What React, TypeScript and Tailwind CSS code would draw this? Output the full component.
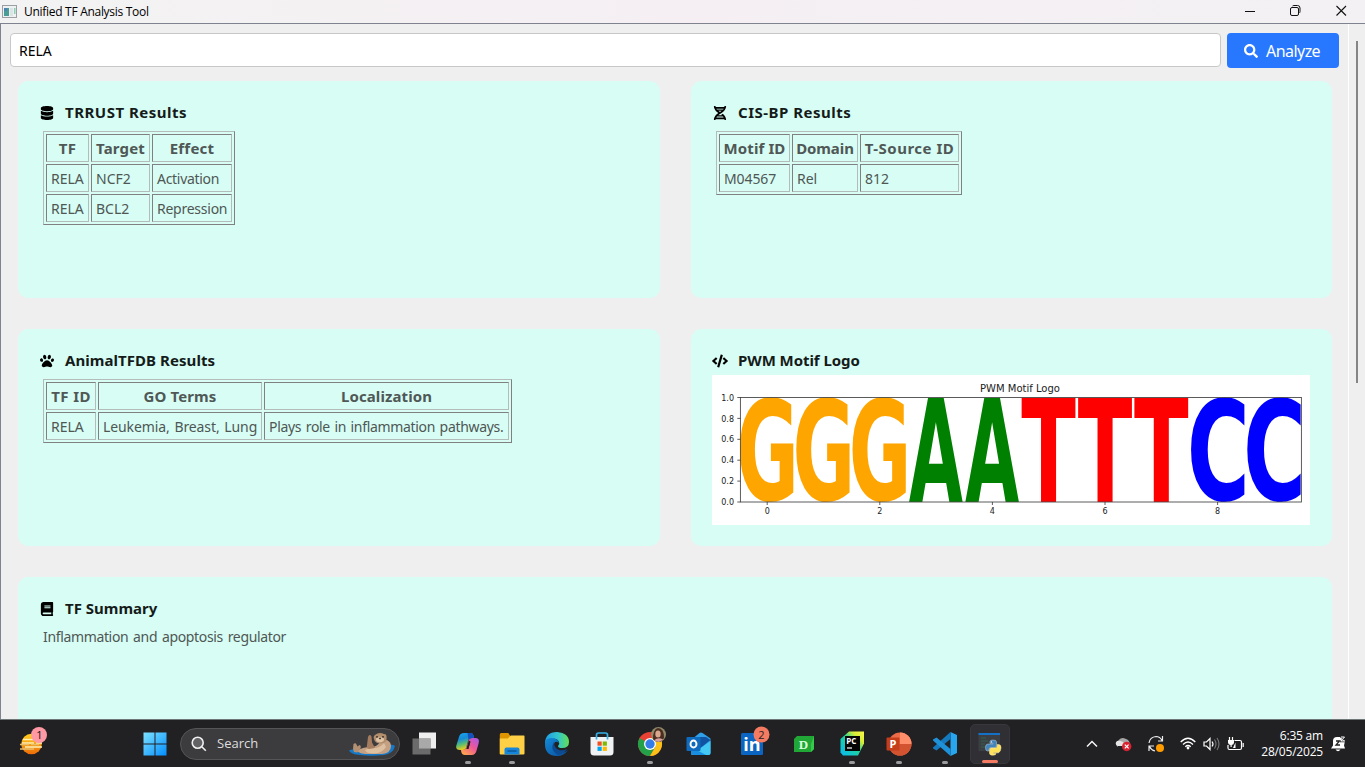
import React from "react";
import { FaDatabase, FaDna, FaPaw, FaCode, FaBook, FaSearch } from "react-icons/fa";

type Col = { title: string; track?: string };

function DataTable({ grid, head, rows }: { grid: string; head: Col[]; rows: Col[][] }) {
  return (
    <div className="ml-1 mt-[7px] w-fit border border-b-[#808080] border-l-[#b4bcba] border-r-[#808080] border-t-[#b4bcba] p-[2px] text-[14px] text-[#4f5754]">
      <div className={`grid auto-rows-[28px] gap-[2px] ${grid}`}>
        {head.map((h) => (
          <div key={h.title} className={`flex items-center justify-center whitespace-nowrap border border-b-[#b4bcba] border-l-[#808080] border-r-[#b4bcba] border-t-[#808080] text-[15px] font-bold text-[#505856] ${h.track ?? ""}`}>
            {h.title}
          </div>
        ))}
        {rows.flatMap((r, i) =>
          r.map((c) => (
            <div key={i + c.title} className={`flex items-center whitespace-nowrap border border-b-[#b4bcba] border-l-[#808080] border-r-[#b4bcba] border-t-[#808080] pl-1 ${c.track ?? ""}`}>
              {c.title}
            </div>
          ))
        )}
      </div>
    </div>
  );
}

function Card({ icon, title, track, children }: { icon: React.ReactNode; title: string; track?: string; children?: React.ReactNode }) {
  return (
    <section className="h-[217px] min-w-0 rounded-[10px] bg-[#d7fdf5] pl-[21px] pt-[19px]">
      <h2 className="flex h-6 items-center text-[15px] font-bold text-[#151b19]">
        <span className="flex w-[26px] items-center text-black">{icon}</span>
        <span className={`whitespace-nowrap ${track ?? ""}`}>{title}</span>
      </h2>
      {children}
    </section>
  );
}

const letters = [
  { c: "G", f: "#ffa500", x: 27.9 },
  { c: "G", f: "#ffa500", x: 84.0 },
  { c: "G", f: "#ffa500", x: 140.3 },
  { c: "A", f: "#008000", x: 197 },
  { c: "A", f: "#008000", x: 253.3 },
  { c: "T", f: "#ff0000", x: 309.7 },
  { c: "T", f: "#ff0000", x: 366.2 },
  { c: "T", f: "#ff0000", x: 422.4 },
  { c: "C", f: "#0000ff", x: 478.7 },
  { c: "C", f: "#0000ff", x: 535 },
];

/* Ink box of each DejaVu Sans Bold capital, in 1/2048 em. */
const ink: Record<string, number[]> = {
  G: [96, 1540, -24, 1513],
  A: [7, 1579, 0, 1493],
  T: [10, 1386, 0, 1493],
  C: [96, 1376, -24, 1513],
};

function MotifPlot() {
  return (
    <svg width="598" height="150" viewBox="0 0 598 150" className="mt-[3px] block bg-white" fontFamily="'DejaVu Sans', sans-serif">
      <g fontWeight="bold" fontSize="100">
        {letters.map((l, i) => {
          const [x0, x1, y0, y1] = ink[l.c];
          const k = 100 / 2048;
          const sx = 53.8 / ((x1 - x0) * k);
          const sy = 104.5 / ((y1 - y0) * k);
          return (
            <text key={i} fill={l.f} transform={`translate(${l.x - x0 * k * sx} ${127 + y0 * k * sy}) scale(${sx} ${sy})`}>{l.c}</text>
          );
        })}
      </g>
      <rect x="28.4" y="22.5" width="561" height="104.5" fill="none" stroke="#4a4a4a" strokeWidth="0.9" />
      <g fontSize="8" fill="#222" textAnchor="end">
        {["1.0", "0.8", "0.6", "0.4", "0.2", "0.0"].map((t, i) => (
          <g key={t}>
            <path d={`M25.3 ${22.5 + i * 20.9}H28.4`} stroke="#333" strokeWidth="0.8" />
            <text x="22" y={25.6 + i * 20.9}>{t}</text>
          </g>
        ))}
      </g>
      <g fontSize="8" fill="#222" textAnchor="middle">
        {["0", "2", "4", "6", "8"].map((t, i) => (
          <g key={t}>
            <path d={`M${55.2 + i * 112.6} 127V130`} stroke="#333" strokeWidth="0.8" />
            <text x={55.2 + i * 112.6} y="139.2">{t}</text>
          </g>
        ))}
        <text x="308" y="17" fontSize="10" textLength="80" lengthAdjust="spacingAndGlyphs">PWM Motif Logo</text>
      </g>
    </svg>
  );
}

function Slot({ children, className, dot }: { children: React.ReactNode; className: string; dot?: boolean }) {
  return (
    <div className={`relative flex h-12 shrink-0 items-center justify-center ${className}`}>
      {children}
      {dot && <span className="absolute bottom-[4px] h-[3px] w-[6px] rounded-full bg-[#9b9b9e]" />}
    </div>
  );
}

function Weather() {
  return (
    <svg width="28" height="28" viewBox="0 0 28 28">
      <defs><linearGradient id="sun" x2="0" y2="1"><stop stopColor="#ffd21c" /><stop offset="1" stopColor="#ee6b08" /></linearGradient></defs>
      <circle cx="12.5" cy="17" r="10.3" fill="url(#sun)" />
      <path d="M4 12.5h17M3 16h12M17 16h6M6 20h17" stroke="#fff0b5" strokeWidth="1.6" />
      <path d="M1 17.5h9M12 17.5h8M1 22h14" stroke="#e8bd6c" strokeWidth="1.6" />
      <circle cx="20" cy="8" r="8" fill="#ff99a4" />
      <text x="20.500" y="12" fontSize="11" textAnchor="middle" fill="#111" fontFamily="'Open Sans', sans-serif">1</text>
    </svg>
  );
}

function Windows() {
  return (
    <svg width="24" height="24" viewBox="0 0 24 24">
      <defs><linearGradient id="win" gradientUnits="userSpaceOnUse" x1="0" y1="0" x2="24" y2="24"><stop stopColor="#80e4ff" /><stop offset="1" stopColor="#008cff" /></linearGradient></defs>
      <path d="M.5.5h11v11H.5zM12.500.5h11v11h-11zM.5 12.500h11v11H.5zM12.500 12.500h11v11h-11z" fill="url(#win)" />
    </svg>
  );
}

function Otter() {
  return (
    <svg width="48" height="24" viewBox="0 0 48 24">
      <path d="M1 18.500q4-2 9-1 18 3 27-1 5-6 10-2.500-2 8-11 9-18 1.500-28-.5-5-1-7-4z" fill="#1479c9" />
      <path d="M9 19q4 3.500 10 3h15q9-1 9-8 0-4-4-6l-7 2q-3 5-9 5-9 0-14 4z" fill="#c5a083" />
      <path d="M17 18q6-3 11-2 5-1 8-5l2 4q-4 6-12 6.500-8 0-9-3.500z" fill="#dcc0a0" />
      <path d="M5 17l.5-5q2-1.500 3 .5l1 2 2-1.500q2 1 1 3.500l-3 4-3.500-.5z" fill="#b39072" />
      <path d="M19 13l1-8q1.500-3.500 3.500-.5l.5 6 3 5.500-6 1q-3-1-2-4z" fill="#a67c5e" />
      <path d="M26 7q-1-3 1-4 4-3.500 9-1 3 0 2.500 3 1 6-5.500 6.500-6 0-7-4.500z" fill="#b38e6d" />
      <ellipse cx="32" cy="7.500" rx="4" ry="2.800" fill="#dfc4a5" />
      <circle cx="29" cy="4.900" r=".8" fill="#24180f" /><circle cx="35" cy="4.900" r=".8" fill="#24180f" />
      <path d="M30.500 5.700h3l-1.500 1.800z" fill="#33231a" />
    </svg>
  );
}

function Copilot() {
  return (
    <svg width="24" height="24" viewBox="0 0 24 24">
      <defs>
        <linearGradient id="cpa" x1="0" y1="0" x2=".3" y2="1"><stop stopColor="#1aa7ee" /><stop offset=".4" stopColor="#168cd8" /><stop offset=".7" stopColor="#59bd73" /><stop offset="1" stopColor="#f3cb1b" /></linearGradient>
        <linearGradient id="cpb" x1="1" y1="0" x2=".2" y2="1"><stop stopColor="#a65af0" /><stop offset=".5" stopColor="#ee5797" /><stop offset="1" stopColor="#ffa64b" /></linearGradient>
      </defs>
      <path fillRule="evenodd" d="M16 6h3q5 0 3.700 5l-2 7q-1 5-5.200 5H9q-3 0-3.700-3L5 18h2.500q2 0 2.800-3l2-6q1-3 3.700-3zM14.500 9.500l-2.200 7.500h-1.500z" fill="url(#cpb)" />
      <path d="M8 1h7q2 0 2.700 3L18 6h-2q-3 0-4 3l-2 7q-1 2-3 2H4q-5 0-3.500-5L3 5q1-4 5-4z" fill="url(#cpa)" />
      <path d="M11.500 1H15q2 0 2.700 3L18 6h-2q-2.500 0-3.500 2z" fill="#1550bd" />
      <path d="M12.800 8.500l1.700 1-2.200 7.500h-2z" fill="#212124" />
    </svg>
  );
}

function Folder() {
  return (
    <svg width="26" height="24" viewBox="0 0 26 24">
      <path d="M.8 2.500Q.8 1 2.300 1h7l2 3H25v18H.8z" fill="#dc9500" />
      <path d="M.8 6.500h8l3-3H25q.5 0 .5 1v17q0 1-1 1H1.500q-.7 0-.7-1z" fill="#ffcf46" />
      <path d="M5.500 22.500V17.500q0-2 2-2h11q2 0 2 2v5z" fill="#1686dc" /><path d="M9 19h8" stroke="#0b5796" strokeWidth="1.500" strokeLinecap="round" />
    </svg>
  );
}

function Edge() {
  return (
    <svg width="24" height="24" viewBox="0 0 24 24">
      <defs>
        <linearGradient id="ea" x2="1"><stop stopColor="#1e9de5" /><stop offset=".55" stopColor="#33c6cb" /><stop offset="1" stopColor="#63df52" /></linearGradient>
        <linearGradient id="eb" x2="1" y2="1"><stop stopColor="#128bd8" /><stop offset="1" stopColor="#0a4d9c" /></linearGradient>
      </defs>
      <path d="M0 12Q0 0 12 0q12 1 12 10 0 6-7 6-4 0-4-2 2-2 1-4-2-4-6-3Q3 7 0 12z" fill="url(#ea)" />
      <path d="M0 12q0-6 6-6 7 0 8 5-4-3-5 1-1 6 5 9 5 1 9-3-4 6-11 6Q0 24 0 12z" fill="url(#eb)" />
      <path d="M9 10q-5 8 4 13 6-1 9-6-4 2-8 1-5-2-5-8z" fill="#0c4a91" />
    </svg>
  );
}

function Store() {
  return (
    <svg width="24" height="24" viewBox="0 0 24 24">
      <path d="M.5 5h23v15q0 3.500-3.500 3.500H4Q.5 23.500.5 20z" fill="#f1f2f4" />
      <path d="M6.500 7.500V3q0-2 2-2h7q2 0 2 2v4.500" fill="none" stroke="#36b1e7" strokeWidth="1.700" />
      <path d="M7.500 9.500h4.200v4.200H7.500z" fill="#f25022" /><path d="M12.700 9.500h4.200v4.200h-4.200z" fill="#7fba00" />
      <path d="M7.500 14.700h4.200v4.200H7.500z" fill="#00a4ef" /><path d="M12.700 14.700h4.200v4.200h-4.200z" fill="#ffb900" />
    </svg>
  );
}

function Chrome() {
  return (
    <svg width="30" height="30" viewBox="0 0 30 30">
      <circle cx="13" cy="18" r="12" fill="#e94235" />
      <path d="M2.600 12A12 12 0 0 0 13 30l5.200-9-5.200-3z" fill="#24a148" />
      <path d="M13 30A12 12 0 0 0 23.400 12H13l5.200 9z" fill="#fbc116" />
      <circle cx="13" cy="18" r="6" fill="#fff" /><circle cx="13" cy="18" r="4.700" fill="#347de8" />
      <circle cx="21.500" cy="8.500" r="7.500" fill="#8f8a68" />
      <path d="M16 13q0-10 5-11 6 0 6 10l-4 4-5-1z" fill="#4b2d22" />
      <ellipse cx="21" cy="8" rx="2.700" ry="3.600" fill="#d9a88c" /><path d="M17 14.500q4-4 9-1l-4 2.500z" fill="#d9a0a0" />
    </svg>
  );
}

function Outlook() {
  return (
    <svg width="25" height="24" viewBox="0 0 25 24">
      <path d="M5 8L13.500 1q1.500-1 3 0l8 5.500V21q0 2-2 2H7q-2 0-2-2z" fill="#2f9fe8" />
      <path d="M12 5h8l4.500 3-10 8-6-4z" fill="#1152a3" /><path d="M5 23l19.500-14v12q0 2-2 2z" fill="#43c9f4" />
      <path d="M5 15l15 8H7q-2 0-2-2z" fill="#198ee0" />
      <rect x=".5" y="5" width="14" height="14" rx="1" fill="#0f6cbd" />
      <ellipse cx="7.500" cy="12" rx="3" ry="3.500" fill="none" stroke="#fff" strokeWidth="1.900" />
    </svg>
  );
}

function LinkedIn() {
  return (
    <svg width="30" height="30" viewBox="0 0 30 30">
      <rect x="1" y="7" width="22" height="22" rx="1.500" fill="#0a66c2" />
      <text x="12" y="25" textAnchor="middle" fill="#fff" fontSize="18" fontWeight="bold" fontFamily="'Open Sans', sans-serif">in</text>
      <circle cx="21.500" cy="8.500" r="8" fill="#f47b62" />
      <text x="21.500" y="12.500" textAnchor="middle" fill="#222" fontSize="11" fontFamily="'Open Sans', sans-serif">2</text>
    </svg>
  );
}

function Dashed() {
  return (
    <svg width="22" height="18" viewBox="0 0 22 18">
      <path d="M4 1h17v13l-3 3H1V4z" fill="#20a735" /><path d="M21 1v13l-3 3V9z" fill="#36c94b" />
      <text x="10.500" y="13.500" textAnchor="middle" fill="#d7ffdc" fontSize="13" fontWeight="bold" fontFamily="'Liberation Serif', serif">D</text>
    </svg>
  );
}

function PyCharm() {
  return (
    <svg width="25" height="25" viewBox="0 0 25 25">
      <defs><linearGradient id="pc" x1="1" y1="0" x2="0" y2="1"><stop stopColor="#fcf84a" /><stop offset=".25" stopColor="#d9ed35" /><stop offset=".5" stopColor="#20d39a" /><stop offset="1" stopColor="#07b8f5" /></linearGradient></defs>
      <path d="M9 .5h15v12l-6 12H3l-2.500-3V8z" fill="url(#pc)" />
      <rect x="5" y="5" width="15" height="15" fill="#050505" />
      <text x="6.300" y="12.500" fill="#fff" fontSize="8" fontWeight="bold" fontFamily="'Open Sans', sans-serif">PC</text><path d="M7 17h5" stroke="#fff" strokeWidth="1.200" />
    </svg>
  );
}

function PowerPoint() {
  return (
    <svg width="26" height="24" viewBox="0 0 26 24">
      <circle cx="14" cy="12" r="11.500" fill="#ed6c47" /><path d="M14 .5A11.500 11.500 0 0 1 25.500 12H14z" fill="#ff8f6b" /><path d="M2.500 12h23a11.500 11.500 0 0 1-23 0z" fill="#d35230" />
      <rect x=".5" y="5.500" width="13" height="13" rx="1" fill="#c43e1c" />
      <text x="7" y="16" textAnchor="middle" fill="#fff" fontSize="11" fontWeight="bold" fontFamily="'Open Sans', sans-serif">P</text>
    </svg>
  );
}

function VSCode() {
  return (
    <svg width="24" height="24" viewBox="0 0 24 24">
      <path d="M17.500 0L24 3v18l-6.500 3z" fill="#27a6ef" />
      <path d="M17.500 0v7L3.500 18.500 0 16.500v-1z" fill="#1479bd" /><path d="M17.500 24v-7L3.500 5.500 0 7.500v1z" fill="#1f91d8" />
    </svg>
  );
}

function PythonApp() {
  return (
    <svg width="24" height="24" viewBox="0 0 24 24">
      <path d="M.5 1h21.500v18H.5z" fill="#3b3e42" /><path d="M.5 1h21.500v2H.5z" fill="#1471c5" />
      <path d="M3 6h5M3 9h7M3 12h4M3 15h5" stroke="#35634c" />
      <path d="M12 9.500Q12 8 15 8q3.500 0 3.500 2v4q0 1.500-1.500 1.500h-4q-2 0-2 2v1.500H9.500Q7.500 19 7.500 15.500T10 12h5v-.7h-3z" fill="#4584b8" stroke="#b8d3e7" strokeWidth=".5" />
      <path d="M18 21.500q0 1.700-3 1.700-3.500 0-3.500-2v-3.500q0-1.700 1.700-1.700h4q2 0 2-2V12.500h1.300q2.500 0 2.500 3.300T20.500 20.800h-5v.7z" fill="#ffe15a" stroke="#fff2b2" strokeWidth=".5" />
      <circle cx="13.500" cy="9.900" r=".6" fill="#fff" />
    </svg>
  );
}

function Tray() {
  return (
    <>
      <svg width="12" height="8" viewBox="0 0 12 8" className="ml-[76px]"><path d="M1 6.500l5-5 5 5" fill="none" stroke="#f5f5f5" strokeWidth="1.500" /></svg>
      <svg width="17" height="16" viewBox="0 0 17 16" className="ml-[17px] mt-px">
        <path d="M3 11q-4-3 0-6Q6 0 11 3q4 1 4 7H3z" fill="#a7a7a7" /><path d="M2 5q6-1 9 5H3q-4-2-1-5z" fill="#e4e4e4" />
        <circle cx="11.700" cy="10.500" r="4.700" fill="#d92332" /><path d="M9.800 8.600l3.800 3.800m0-3.800l-3.800 3.800" stroke="#fff" strokeWidth="1.200" />
      </svg>
      <svg width="19" height="18" viewBox="0 0 19 18" className="ml-[15px]">
        <path d="M2 8Q3 2 9 1.500q4 0 6 4M15.500 1v5H11M2 16v-5h5M2.500 11.500Q4 15 8 16" fill="none" stroke="#eee" strokeWidth="1.200" /><circle cx="13" cy="13" r="4" fill="#ff9c00" />
      </svg>
      <svg width="16" height="13" viewBox="0 0 16 13" className="ml-[14px]">
        <path d="M.7 5q7.300-7.500 14.600 0M3 7.500q5-5 10 0M5.300 9.700q2.700-2.500 5.400 0" fill="none" stroke="#fff" strokeWidth="1.300" /><circle cx="8" cy="11" r="1.400" fill="#fff" />
      </svg>
      <svg width="17" height="14" viewBox="0 0 17 14" className="ml-[7px]">
        <path d="M1 5h2.500L7 1.500v11L3.500 9H1zM9 4.500q2 2.500 0 5" fill="none" stroke="#fff" strokeWidth="1.200" /><path d="M11.500 2.500q3 4.500 0 9M14 1q4 6 0 12" fill="none" stroke="#777" strokeWidth="1.100" />
      </svg>
      <svg width="17" height="14" viewBox="0 0 17 14" className="ml-[7px]">
        <path d="M7.500 3.500H13q1.500 0 1.500 1.500v6q0 1.500-1.500 1.500H2.500Q1 12.500 1 11V8" fill="none" stroke="#fff" strokeWidth="1.200" /><path d="M16.200 6v4M2.500 0v3M5.500 0v3" stroke="#fff" strokeWidth="1.200" /><path d="M1 3h6v2.500q0 2-2.300 2.500v2H3.500V8Q1 7.500 1 5.500zM6 11l2.500-5.500V11z" fill="#fff" />
      </svg>
    </>
  );
}

export default function App() {
  return (
    <div className="flex h-[767px] w-[1365px] flex-col overflow-hidden bg-[#efefef] font-['Noto_Sans',sans-serif]">
      <header className="flex h-6 shrink-0 items-center border-b border-[#7f838f] bg-linear-to-r from-[#f3f3f3] via-[#f5eff3] to-[#f3f1f3] pl-[2px]">
        <svg width="15" height="13" viewBox="0 0 15 13" className="-mt-px"><rect x=".5" y=".5" width="14" height="12" fill="#eef1f2" stroke="#9da0a3" /><path d="M2 3h5v8H2z" fill="#4b9e96" /><path d="M2 3h3v3H2z" fill="#4f83b4" /><path d="M8 3h3v8H8z" fill="#dce3e5" /><path d="M12 3h1.500v6H12z" fill="#8ccfb3" /></svg>
        <span className="ml-[7px] font-['Open_Sans',sans-serif] text-[12px] tracking-[-0.29px] text-black">Unified TF Analysis Tool</span>
        <svg width="102" height="12" viewBox="0 0 102 12" className="ml-auto mr-[18px] -mt-px" fill="none" stroke="#111">
          <path d="M0 6.500h10" /><path d="M45.500 4q0-1.500 1.500-1.500h5q1.500 0 1.500 1.500v5q0 1.500-1.500 1.500h-5q-1.500 0-1.500-1.500zM47.500 1q.5-.5 1.500-.5h3.500q2.500 0 2.500 2.500v3.500q0 1-.7 1.500" /><path d="M91.500 1l9.500 9.500M101 1l-9.500 9.500" strokeWidth="1.100" />
        </svg>
      </header>

      <main className="flex h-[695px] shrink-0 overflow-hidden border-l border-[#7f838f]">
        <div className="flex w-[1347px] shrink-0 flex-col">
          <div className="flex gap-[6px] pl-[9px] pt-[9px]">
            <div className="flex h-[34px] w-[1211px] items-center rounded-[4px] border border-[#c8c8c8] bg-white pl-2 text-[14px] text-black">RELA</div>
            <button className="flex h-[35px] w-[112px] items-center rounded-[4px] bg-[#2878ff] pl-[17px] text-[16px] text-white">
              <FaSearch className="mr-[8px] size-[14px] shrink-0" />
              <span className="tracking-[-0.55px]">Analyze</span>
            </button>
          </div>
          <div className="mt-[13px] grid grid-cols-[642px_641px] gap-x-[31px] gap-y-[31px] pl-[17px]">
            <Card icon={<FaDatabase className="ml-px mt-px size-[14px]" />} title="TRRUST Results" track="tracking-[0.5px]">
              <DataTable
                grid="grid-cols-[43px_59px_80px]"
                head={[{ title: "TF", track: "tracking-[0.4px]" }, { title: "Target", track: "tracking-[0.15px]" }, { title: "Effect", track: "tracking-[0.25px]" }]}
                rows={[
                  [{ title: "RELA" }, { title: "NCF2" }, { title: "Activation", track: "tracking-[-0.3px]" }],
                  [{ title: "RELA" }, { title: "BCL2" }, { title: "Repression", track: "tracking-[-0.25px]" }],
                ]}
              />
            </Card>
            <Card icon={<FaDna className="ml-px mt-px size-[14px]" />} title="CIS-BP Results" track="tracking-[0.5px]">
              <DataTable
                grid="grid-cols-[71px_66px_99px]"
                head={[{ title: "Motif ID", track: "tracking-[0.1px]" }, { title: "Domain", track: "tracking-[-0.1px]" }, { title: "T-Source ID", track: "tracking-[0.5px]" }]}
                rows={[[{ title: "M04567", track: "tracking-[-0.1px]" }, { title: "Rel" }, { title: "812" }]]}
              />
            </Card>
            <Card icon={<FaPaw className="ml-px mt-px size-[14px]" />} title="AnimalTFDB Results" track="tracking-[0.06px]">
              <DataTable
                grid="grid-cols-[50px_164px_245px]"
                head={[{ title: "TF ID", track: "tracking-[0.4px]" }, { title: "GO Terms", track: "tracking-[0.12px]" }, { title: "Localization", track: "tracking-[0.1px]" }]}
                rows={[[{ title: "RELA" }, { title: "Leukemia, Breast, Lung", track: "tracking-[-0.1px] [word-spacing:1.2px]" }, { title: "Plays role in inflammation pathways.", track: "tracking-[-0.32px] [word-spacing:1.2px]" }]]}
              />
            </Card>
            <Card icon={<FaCode className="mt-px size-4" />} title="PWM Motif Logo" track="tracking-[-0.07px]">
              <MotifPlot />
            </Card>
            <div className="col-span-2">
              <Card icon={<FaBook className="ml-px mt-px size-[14px]" />} title="TF Summary">
                <p className="ml-1 mt-[5px] text-[14px] leading-6 tracking-[-0.35px] text-[#4f5754] [word-spacing:1.5px]">Inflammation and apoptosis regulator</p>
              </Card>
            </div>
          </div>
        </div>
        <div className="flex grow border-l border-white pl-[7px] pt-[17px]">
          <div className="h-[342px] w-[2px] bg-[#858585]" />
        </div>
      </main>

      <footer className="flex h-12 shrink-0 items-center border-t border-[#6f7678] bg-[#212124] font-['Open_Sans',sans-serif] text-white">
        <div className="ml-[19px] mt-[-6px] w-[28px]"><Weather /></div>
        <div className="ml-[96px]"><Windows /></div>
        <div className="ml-[13px] flex h-8 w-[220px] items-center rounded-full border border-[#555558] bg-[#3c3c3f] pl-[10px]">
          <svg width="16" height="16" viewBox="0 0 16 16" fill="#626265" stroke="#f0f0f0" strokeWidth="1.600"><circle cx="6.700" cy="6.700" r="5.500" /><path d="M10.800 10.800l4 4" /></svg>
          <span className="ml-[10px] text-[13px] text-[#dedede]">Search</span>
          <span className="ml-auto mr-[3px]"><Otter /></span>
        </div>
        <Slot className="w-12">
          <svg width="24" height="23" viewBox="0 0 24 23"><path d="M7 .5h17v16H7z" fill="#eeeeee" /><path d="M.5 6.500h18v16H.5z" fill="#707070" fillOpacity=".95" /><path d="M7 6.500h11.500v10H7z" fill="#a9a9a9" /></svg>
        </Slot>
        <Slot className="w-[40px]" dot><Copilot /></Slot>
        <Slot className="w-[48px]" dot><Folder /></Slot>
        <Slot className="w-[42px]"><Edge /></Slot>
        <Slot className="w-[48px]"><Store /></Slot>
        <Slot className="w-[48px]" dot><span className="-mt-[6px] ml-[3px]"><Chrome /></span></Slot>
        <Slot className="w-[48px]"><Outlook /></Slot>
        <Slot className="w-[62px]"><span className="-mt-[6px] ml-[3px]"><LinkedIn /></span></Slot>
        <Slot className="w-[40px]"><Dashed /></Slot>
        <Slot className="w-[56px]" dot><PyCharm /></Slot>
        <Slot className="w-[38px]" dot><PowerPoint /></Slot>
        <Slot className="w-[54px]" dot><VSCode /></Slot>
        <div className="relative ml-[-2px] flex h-10 w-10 shrink-0 items-center justify-center rounded-[5px] border border-[#38383c] bg-[#303034]">
          <PythonApp />
          <span className="absolute bottom-0 h-[3px] w-4 rounded-full bg-[#f47b62]" />
        </div>
        <Tray />
        <div className="ml-auto mr-[8px] text-right text-[12px] leading-4 tracking-[-0.2px]">
          <div>6:35 am</div>
          <div>28/05/2025</div>
        </div>
        <svg width="15" height="16" viewBox="0 0 15 16" className="mr-[19px]">
          <path d="M0 12.500l2-3V5q0-4 4-4h3l5 4-1 4.500 1 3zM4.500 13.500h5Q7 17 4.500 13.500z" fill="#fff" /><path d="M9.500 1h4l-3.500 4.500h4M5 5h3.500L5 9h4" fill="none" stroke="#222" strokeWidth="1.300" /><path d="M10 1h3.500L10 5h4" fill="none" stroke="#fff" />
        </svg>
      </footer>
    </div>
  );
}
